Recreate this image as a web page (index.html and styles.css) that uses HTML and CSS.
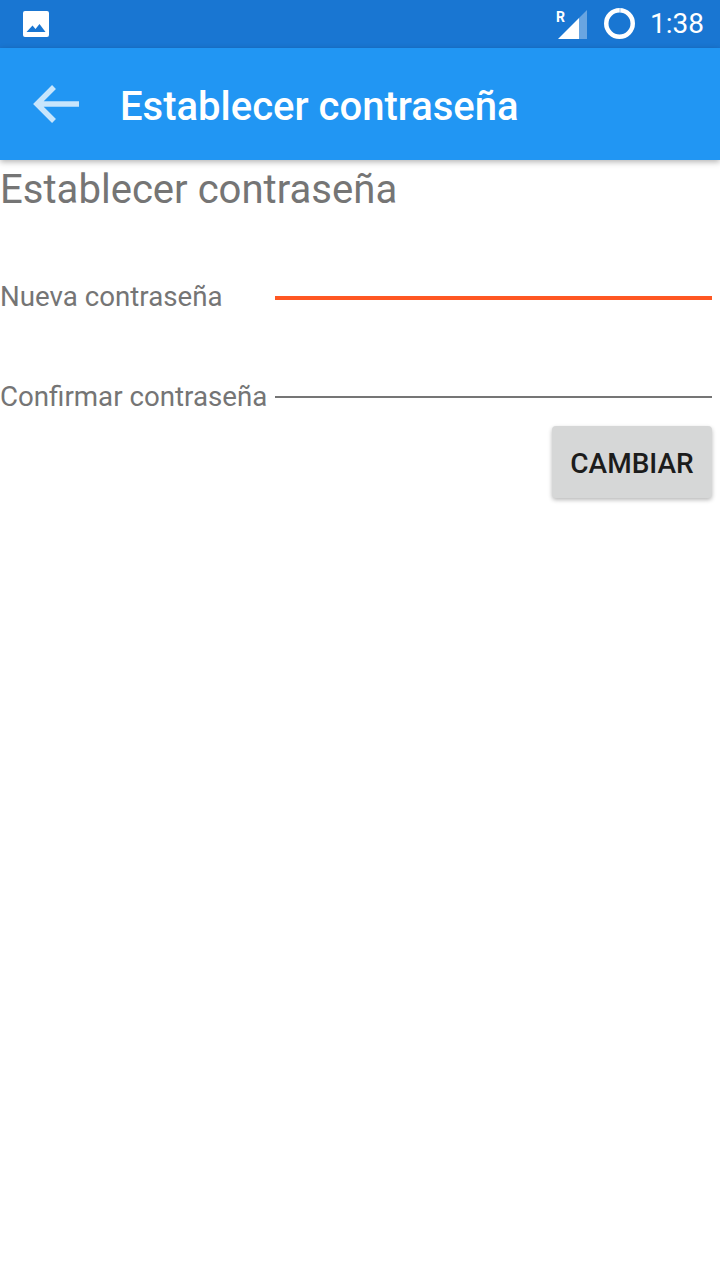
FILE: index.html
```html
<!DOCTYPE html>
<html lang="es">
<head>
<meta charset="utf-8">
<title>Establecer contraseña</title>
<link rel="stylesheet" href="styles.css">
</head>
<body>
<div class="status">
  <svg class="pic" width="26" height="26" viewBox="0 0 26 26"><path fill="#fff" fill-rule="evenodd" d="M2 0H24Q26 0 26 2V24Q26 26 24 26H2Q0 26 0 24V2Q0 0 2 0ZM3.500 21H22.500L16.500 13L12.500 18L9.500 14.500Z"/></svg>
  <div class="status-right">
    <svg class="signal" width="32" height="30" viewBox="0 0 32 30"><text x="0" y="12" class="roam">R</text><path fill="#fff" d="M2 29L23 8V29Z"/><path fill="#fff" fill-opacity=".35" d="M23 8L31 0V29H23Z"/></svg>
    <svg class="ring" width="31" height="32" viewBox="0 0 31 32"><circle cx="15.500" cy="15.500" r="13.250" fill="none" stroke="#fff" stroke-width="4.500"/><path d="M16 0V4.500" stroke="#1976d2" stroke-opacity=".4" stroke-width="1"/></svg>
    <span class="clock">1:38</span>
  </div>
</div>
<header class="bar">
  <svg class="back" width="48" height="42" viewBox="0 0 48 42"><path fill="none" stroke="#fff" stroke-opacity=".75" stroke-width="5.500" d="M46 21H5M21 4L4 21L21 38"/></svg>
  <h1 class="bar-title">Establecer contraseña</h1>
</header>
<main class="content">
  <h2 class="heading">Establecer contraseña</h2>
  <div class="row row-first">
    <label class="label">Nueva contraseña</label>
    <div class="input input-active"></div>
  </div>
  <div class="row row-second">
    <label class="label">Confirmar contraseña</label>
    <div class="input"></div>
  </div>
  <div class="actions"><button class="btn">CAMBIAR</button></div>
</main>
</body>
</html>
```
FILE: styles.css
```css
* { box-sizing: border-box; }
html, body { margin: 0; padding: 0; }
body { width: 720px; height: 1280px; background: #fff; font-family: Roboto, "Noto Sans", sans-serif; overflow: hidden; }
.status { height: 48px; background: #1976d2; display: flex; align-items: center; justify-content: space-between; padding: 0 16px 0 23px; }
.status-right { display: flex; align-items: center; }
.signal { margin-right: 16px; margin-top: 2px; }
.roam { font: 700 14px Roboto, sans-serif; fill: #fff; }
.ring { margin-right: 15px; }
.clock { color: #fff; font-size: 28px; font-weight: 400; line-height: 48px; }
.bar { position: relative; height: 112px; background: #2196f3; display: flex; align-items: center; padding-left: 33px; box-shadow: 0 2px 6px rgba(0,0,0,.3); }
.back { margin-right: 39px; }
.bar-title { margin: 0; color: #fff; font-size: 40px; font-weight: 500; line-height: 48px; padding-top: 6px; }
.content { display: flex; flex-direction: column; padding-right: 8px; }
.heading { margin: 6px 0 0; height: 48px; color: #757575; font-size: 40.100px; font-weight: 400; line-height: 48px; }
.row { display: flex; gap: 8px; color: #757575; height: 40px; }
.row-first { margin-top: 63px; }
.row-second { margin-top: 60px; }
.label { width: 267px; font-size: 27.700px; line-height: 40px; white-space: nowrap; }
.input { flex: 1; height: 2px; background: #757575; margin-top: 19px; }
.input-active { height: 4px; background: #ff5722; }
.actions { display: flex; justify-content: flex-end; margin-top: 9px; }
.btn { width: 160px; height: 72px; border: 0; border-radius: 4px; background: #d6d7d7; color: #1c1c1c; font-family: Roboto, sans-serif; font-size: 28px; font-weight: 500; box-shadow: 0 2px 4px rgba(0,0,0,.28); padding: 2px 0 0; }
```
